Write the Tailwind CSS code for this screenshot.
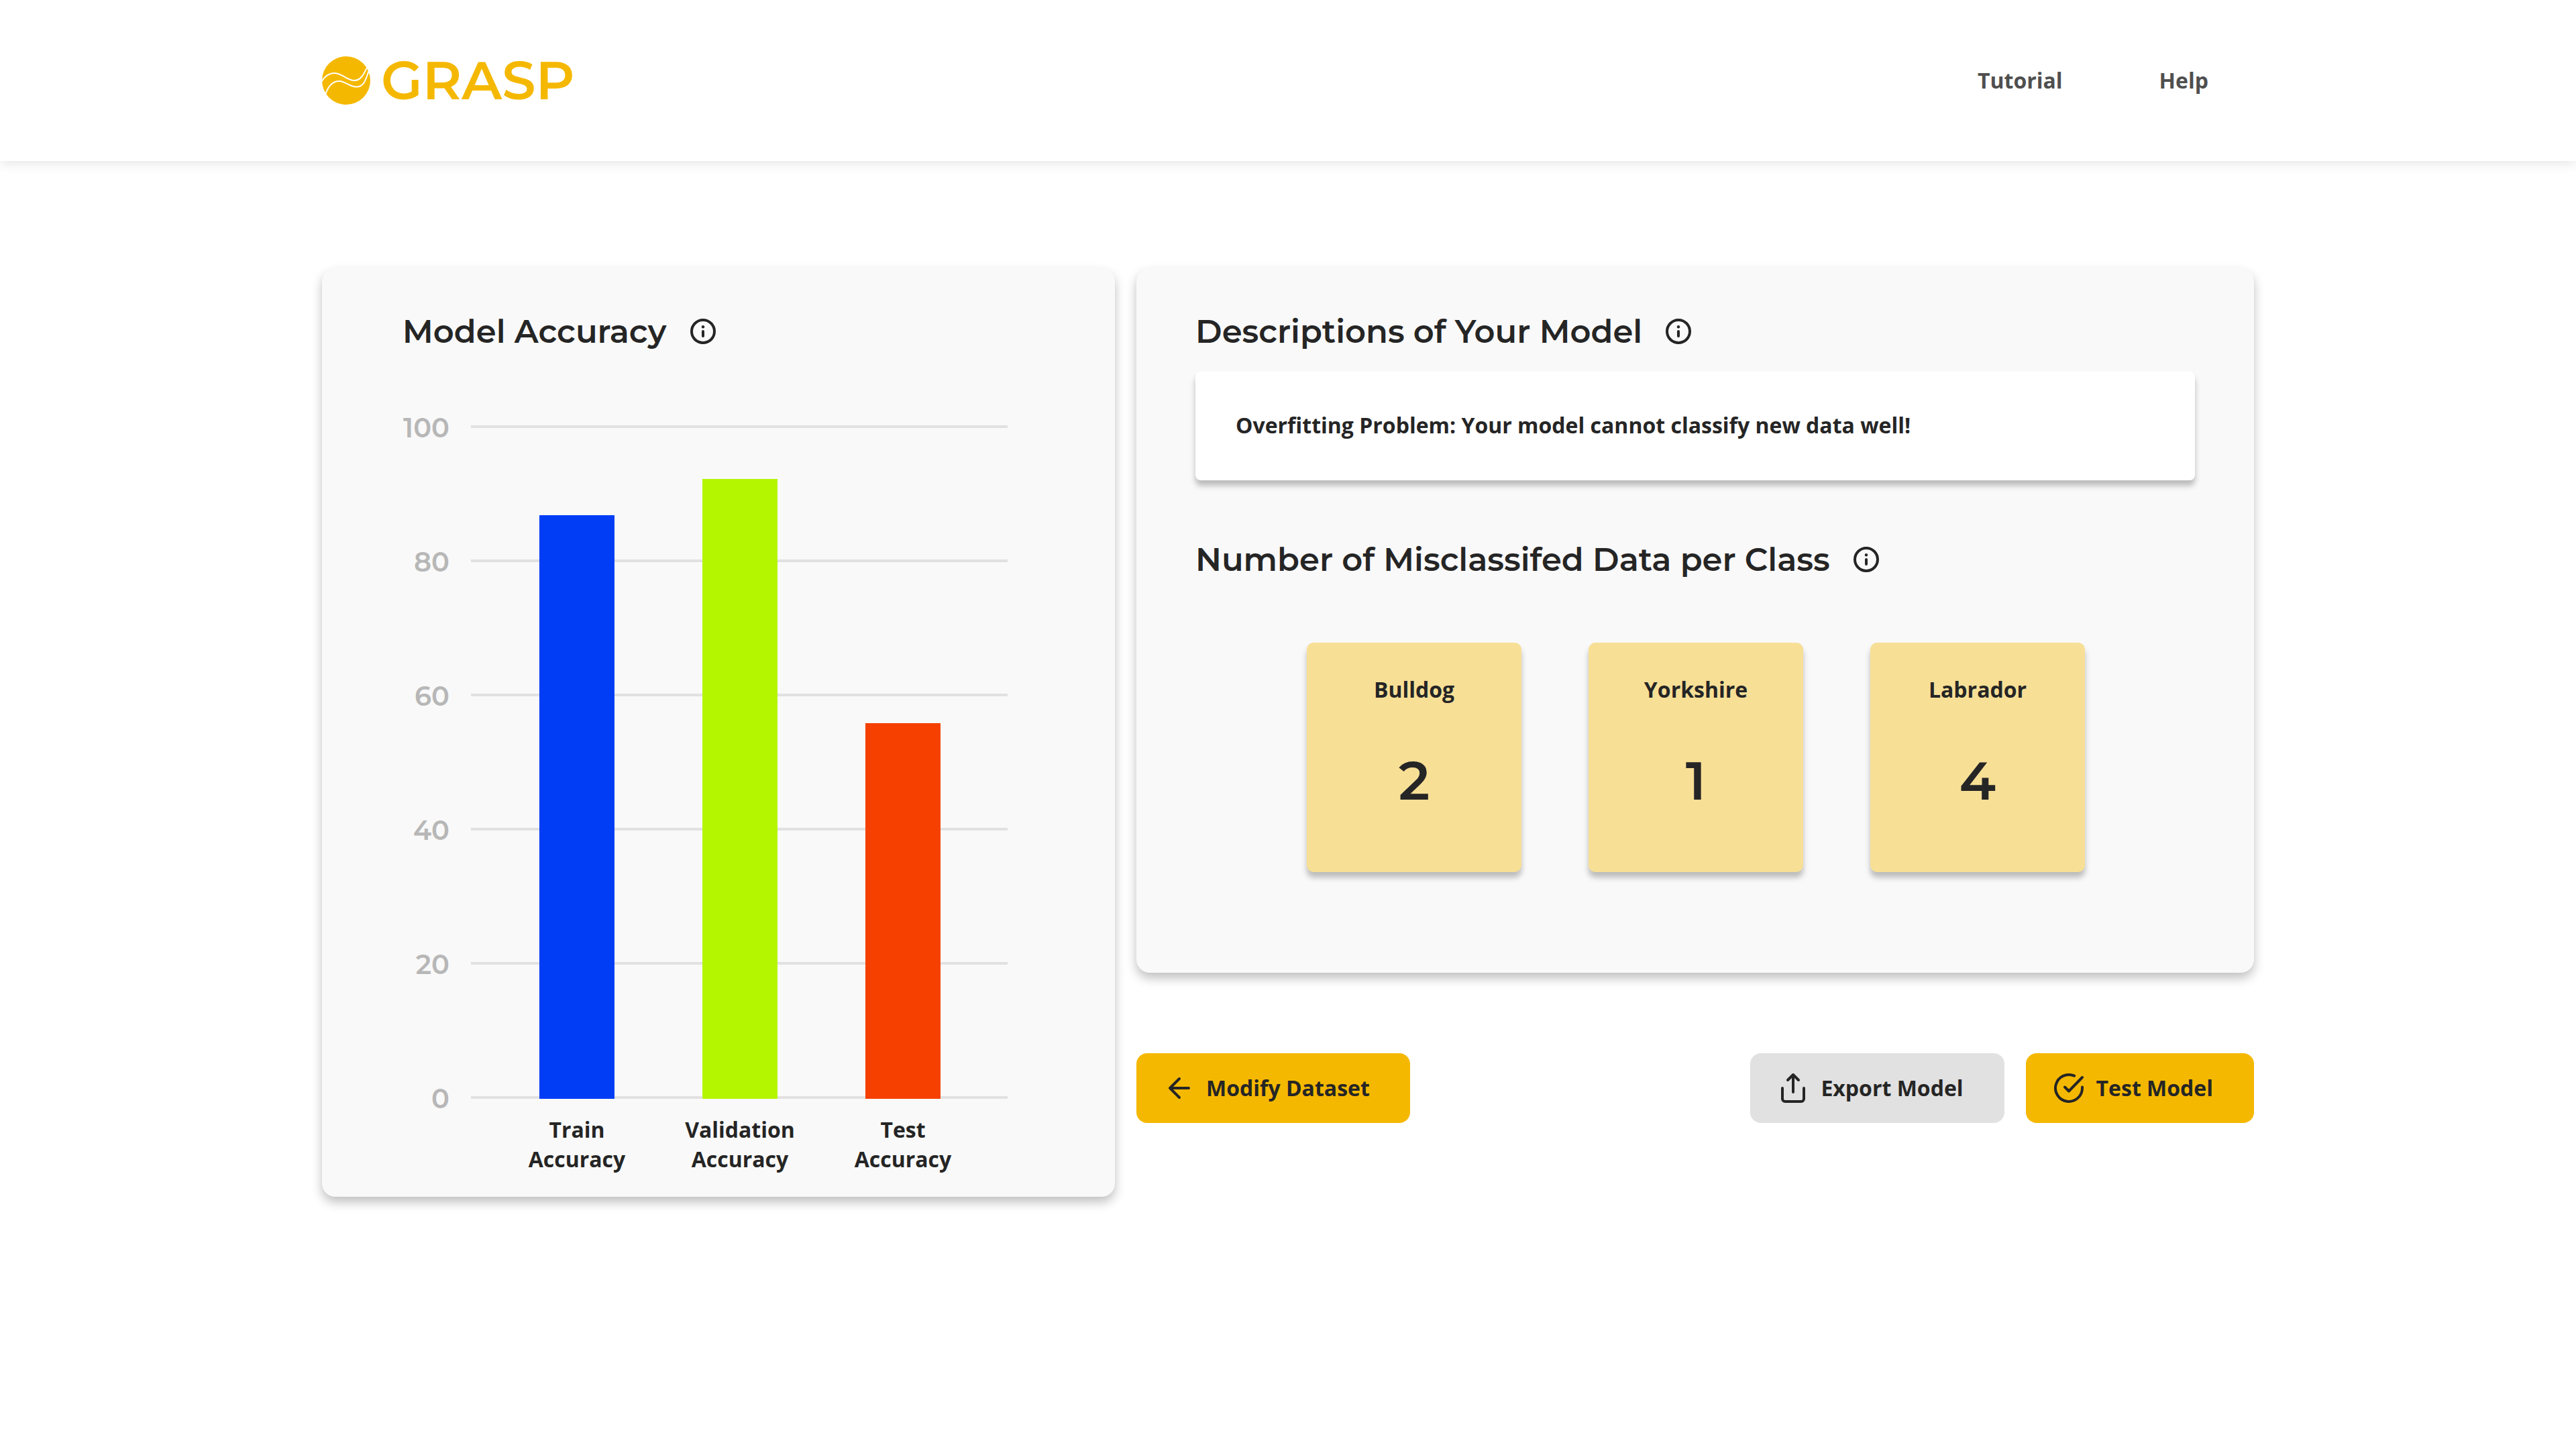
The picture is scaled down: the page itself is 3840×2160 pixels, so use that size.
<!DOCTYPE html>
<html lang="en">
<head>
<meta charset="utf-8">
<meta name="viewport" content="width=device-width, initial-scale=1">
<title>GRASP</title>
<script src="https://cdn.jsdelivr.net/npm/@tailwindcss/browser@4"></script>
</head>
<body class="min-h-screen bg-white font-['Open_Sans','Noto_Sans',sans-serif] text-[32px] leading-[44px] font-bold text-[#252525]">

<svg class="hidden" aria-hidden="true">
  <symbol id="info" viewBox="0 0 40 40">
    <circle cx="20" cy="20" r="17" fill="none" stroke="currentColor" stroke-width="4"/>
    <circle cx="20" cy="13.3" r="2.2" fill="currentColor"/>
    <path d="M20 20V27" fill="none" stroke="currentColor" stroke-width="4" stroke-linecap="round"/>
  </symbol>
</svg>

<header class="bg-white px-[12.5%] shadow-[0_4px_16px_rgba(0,0,0,0.1)]">
  <div class="flex h-60 items-center justify-between">
    <a href="#" class="flex items-center gap-4 text-[#f5b800]">
      <svg class="size-[72px]" viewBox="0 0 72 72" aria-hidden="true">
        <circle cx="36" cy="36" r="36" fill="currentColor"/>
        <g fill="none" stroke="#fff" stroke-width="2">
          <path d="M-1 38C6 27 14 23 24 26C33 29 40 36 48 36C58 36 62 27 68 15"/>
          <path d="M5 57C10 42 17 36 27 37C36 38 43 46 52 45.500C62 45 65 36 70 21"/>
        </g>
      </svg>
      <span class="font-[Montserrat,Inter,sans-serif] text-[80px] leading-[96px] font-semibold">GRASP</span>
    </a>
    <nav class="flex gap-36 pr-[68px] text-[#4f4f4f]">
      <a href="#">Tutorial</a>
      <a href="#">Help</a>
    </nav>
  </div>
</header>

<main class="grid grid-cols-[1182fr_1666fr] items-start gap-8 px-[12.5%] pt-40 pb-40">

  <section class="rounded-[20px] bg-[#f9f9f9] pt-16 pr-[160px] pb-[34px] pl-[120px] shadow-[0_8px_16px_rgba(0,0,0,0.25)]">
    <div class="flex items-center gap-[34px]">
      <h2 class="font-[Montserrat,Inter,sans-serif] text-[48px] leading-[60px] font-semibold whitespace-nowrap">Model Accuracy</h2>
      <button type="button" aria-label="About model accuracy"><svg class="size-10"><use href="#info"/></svg></button>
    </div>

    <div class="mt-[92px] grid grid-cols-1">
      <div class="col-start-1 row-start-1 flex flex-col gap-[160px] self-start font-[Montserrat,Inter,sans-serif] text-[40px] leading-[40px] font-semibold text-[#b7b7b7]">
        <div class="flex h-10 items-center gap-8"><span class="w-[70px] pt-1 text-right">100</span><span class="h-1 flex-1 bg-[#e1e1e1]"></span></div>
        <div class="flex h-10 items-center gap-8"><span class="w-[70px] pt-1 text-right">80</span><span class="h-1 flex-1 bg-[#e1e1e1]"></span></div>
        <div class="flex h-10 items-center gap-8"><span class="w-[70px] pt-1 text-right">60</span><span class="h-1 flex-1 bg-[#e1e1e1]"></span></div>
        <div class="flex h-10 items-center gap-8"><span class="w-[70px] pt-1 text-right">40</span><span class="h-1 flex-1 bg-[#e1e1e1]"></span></div>
        <div class="flex h-10 items-center gap-8"><span class="w-[70px] pt-1 text-right">20</span><span class="h-1 flex-1 bg-[#e1e1e1]"></span></div>
        <div class="flex h-10 items-center gap-8"><span class="w-[70px] pt-1 text-right">0</span><span class="h-1 flex-1 bg-[#e1e1e1]"></span></div>
      </div>
      <ul class="z-10 col-start-1 row-start-1 mt-[22px] grid grid-cols-3 gap-px pr-[35px] pl-[139px] text-center">
        <li class="flex flex-col items-center gap-6">
          <div class="flex h-[1000px] items-end"><div class="w-28 bg-[#003df5]" style="height:87%"></div></div>
          <p>Train<br>Accuracy</p>
        </li>
        <li class="flex flex-col items-center gap-6">
          <div class="flex h-[1000px] items-end"><div class="w-28 bg-[#b4f500]" style="height:92.4%"></div></div>
          <p>Validation<br>Accuracy</p>
        </li>
        <li class="flex flex-col items-center gap-6">
          <div class="flex h-[1000px] items-end"><div class="w-28 bg-[#f54000]" style="height:56%"></div></div>
          <p>Test<br>Accuracy</p>
        </li>
      </ul>
    </div>
  </section>

  <div>
    <section class="rounded-[20px] bg-[#f9f9f9] px-[88px] pt-16 pb-[150px] shadow-[0_8px_16px_rgba(0,0,0,0.25)]">
      <div class="flex items-center gap-[34px]">
        <h2 class="font-[Montserrat,Inter,sans-serif] text-[48px] leading-[60px] font-semibold whitespace-nowrap">Descriptions of Your Model</h2>
        <button type="button" aria-label="About model descriptions"><svg class="size-10"><use href="#info"/></svg></button>
      </div>
      <p class="mt-[30px] rounded-lg bg-white px-[60px] pt-[58px] pb-[60px] shadow-[0_8px_8px_rgba(0,0,0,0.25)]">Overfitting Problem: Your model cannot classify new data well!</p>

      <div class="mt-[88px] flex items-center gap-[34px]">
        <h2 class="font-[Montserrat,Inter,sans-serif] text-[48px] leading-[60px] font-semibold whitespace-nowrap">Number of Misclassifed Data per Class</h2>
        <button type="button" aria-label="About misclassified data"><svg class="size-10"><use href="#info"/></svg></button>
      </div>
      <dl class="mt-[94px] flex justify-center gap-[100px] pl-[2px] text-center">
        <div class="w-80 rounded-[10px] bg-[#f7df96] pt-12 pb-[88px] shadow-[0_8px_8px_rgba(0,0,0,0.25)]">
          <dt>Bulldog</dt>
          <dd class="mt-[66px] font-[Montserrat,Inter,sans-serif] text-[80px] leading-[96px] font-semibold">2</dd>
        </div>
        <div class="w-80 rounded-[10px] bg-[#f7df96] pt-12 pb-[88px] shadow-[0_8px_8px_rgba(0,0,0,0.25)]">
          <dt>Yorkshire</dt>
          <dd class="mt-[66px] font-[Montserrat,Inter,sans-serif] text-[80px] leading-[96px] font-semibold">1</dd>
        </div>
        <div class="w-80 rounded-[10px] bg-[#f7df96] pt-12 pb-[88px] shadow-[0_8px_8px_rgba(0,0,0,0.25)]">
          <dt>Labrador</dt>
          <dd class="mt-[66px] font-[Montserrat,Inter,sans-serif] text-[80px] leading-[96px] font-semibold">4</dd>
        </div>
      </dl>
    </section>

    <div class="mt-[120px] flex gap-8">
      <button type="button" class="mr-auto flex h-[104px] items-center gap-4 rounded-2xl bg-[#f5b800] pr-[60px] pl-10">
        <svg class="size-12" viewBox="0 0 48 48" fill="none" stroke="currentColor" stroke-width="4" stroke-linecap="round" stroke-linejoin="round" aria-hidden="true"><path d="M38 24H10M24 10L10 24l14 14"/></svg>
        Modify Dataset
      </button>
      <button type="button" class="flex h-[104px] items-center gap-[17px] rounded-2xl bg-[#e1e1e1] pr-[61px] pl-10">
        <svg class="size-12" viewBox="0 0 48 48" fill="none" stroke="currentColor" stroke-width="4" stroke-linecap="round" stroke-linejoin="round" aria-hidden="true"><path d="M8 24v16a4 4 0 0 0 4 4h24a4 4 0 0 0 4-4V24M24 30V4M16 12l8-8 8 8"/></svg>
        Export Model
      </button>
      <button type="button" class="flex h-[104px] items-center gap-[17px] rounded-2xl bg-[#f5b800] pr-[61px] pl-10">
        <svg class="size-12" viewBox="0 0 48 48" fill="none" stroke="currentColor" stroke-width="4" stroke-linecap="round" stroke-linejoin="round" aria-hidden="true"><path d="M44 22.500V24A20 20 0 1 1 32.100 5.700M18 22.500l6 6L44 8"/></svg>
        Test Model
      </button>
    </div>
  </div>
</main>
</body>
</html>
